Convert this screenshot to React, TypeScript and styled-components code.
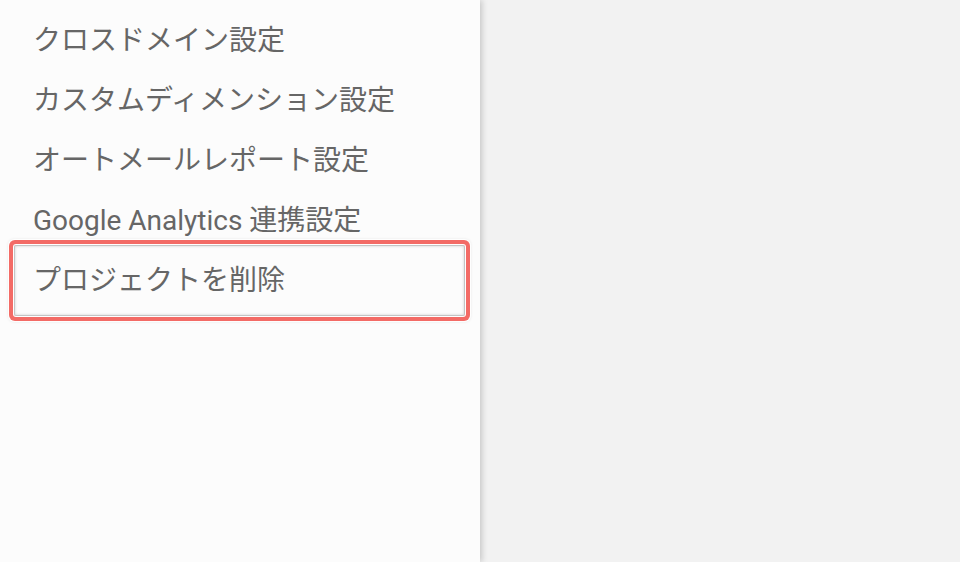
import styled, { createGlobalStyle } from "styled-components";

const GlobalStyle = createGlobalStyle`
  html, body {
    margin: 0;
    padding: 0;
    height: 100%;
    background: #f2f2f2;
  }
  #root {
    height: 100%;
  }
`;

const Page = styled.div`
  display: flex;
  height: 562px;
  overflow: hidden;
  background: #f2f2f2;
  font-family: Roboto, "Noto Sans CJK JP", sans-serif;
`;

const Sidebar = styled.nav`
  width: 480px;
  flex-shrink: 0;
  background: #fcfcfc;
  box-shadow: 2px 0 6px rgba(0, 0, 0, 0.18);
  position: relative;
  z-index: 1;
`;

const Menu = styled.ul`
  list-style: none;
  margin: 0;
  padding: 11px 0 0;
`;

const Item = styled.li<{ $marked?: boolean }>`
  position: relative;
  height: 60px;
  padding-left: 33px;
  font-size: 28px;
  line-height: 60px;
  color: #666;
  white-space: nowrap;

  ${(p) =>
    p.$marked &&
    `
    &::before {
      content: "";
      position: absolute;
      top: -6px;
      bottom: -5px;
      left: 14px;
      right: 15px;
      border: 1px solid #c4c4c4;
      border-radius: 2px;
      box-shadow: inset 0 0 3px rgba(0, 0, 0, 0.18),
        0 0 0 1px #fff,
        0 0 0 5px #f36b66,
        0 0 0 6px rgba(255, 255, 255, 0.9),
        0 0 3px 6px rgba(0, 0, 0, 0.08);
      pointer-events: none;
    }
  `}
`;

const Main = styled.main`
  flex: 1;
  background: #f2f2f2;
`;

const items = [
  "クロスドメイン設定",
  "カスタムディメンション設定",
  "オートメールレポート設定",
  "Google Analytics 連携設定",
  "プロジェクトを削除",
];

export default function App() {
  return (
    <>
      <GlobalStyle />
      <Page>
        <Sidebar>
          <Menu>
            {items.map((label, i) => (
              <Item key={label} $marked={i === items.length - 1}>
                {label}
              </Item>
            ))}
          </Menu>
        </Sidebar>
        <Main />
      </Page>
    </>
  );
}
